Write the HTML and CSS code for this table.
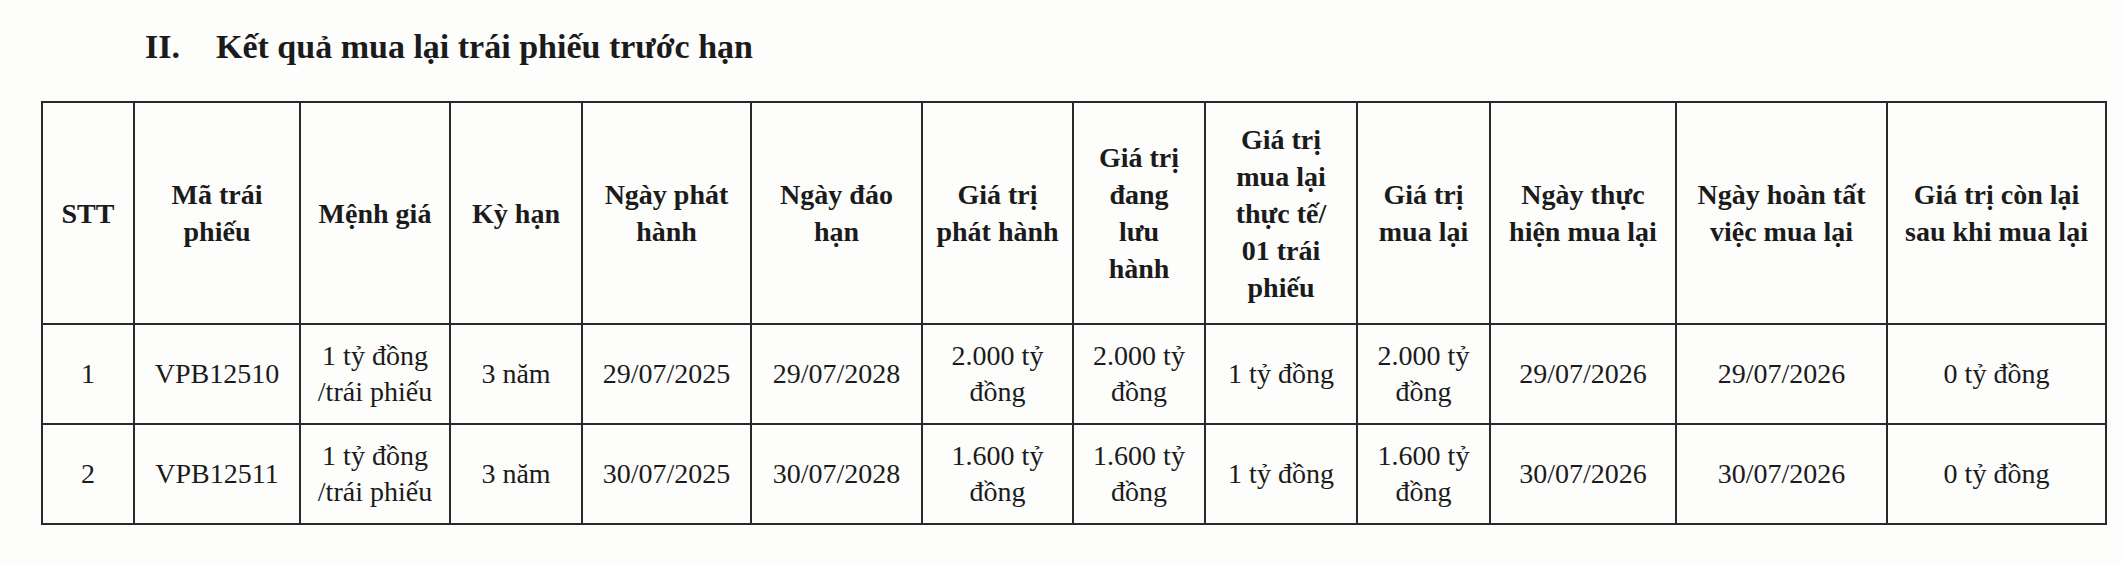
FILE: index.html
```html
<!DOCTYPE html>
<html lang="vi">
<head>
<meta charset="utf-8">
<title>Kết quả mua lại trái phiếu trước hạn</title>
<link rel="stylesheet" href="styles.css">
</head>
<body>
<div class="page">
  <h2 class="title"><span class="num">II.</span><span class="text">Kết quả mua lại trái phiếu trước hạn</span></h2>
  <table class="bonds">
    <colgroup>
      <col class="c1"><col class="c2"><col class="c3"><col class="c4"><col class="c5"><col class="c6"><col class="c7"><col class="c8"><col class="c9"><col class="c10"><col class="c11"><col class="c12"><col class="c13">
    </colgroup>
    <thead>
      <tr class="head">
        <th>STT</th>
        <th>Mã trái<br>phiếu</th>
        <th>Mệnh giá</th>
        <th>Kỳ hạn</th>
        <th>Ngày phát<br>hành</th>
        <th>Ngày đáo<br>hạn</th>
        <th>Giá trị<br>phát hành</th>
        <th>Giá trị<br>đang<br>lưu<br>hành</th>
        <th>Giá trị<br>mua lại<br>thực tế/<br>01 trái<br>phiếu</th>
        <th>Giá trị<br>mua lại</th>
        <th>Ngày thực<br>hiện mua lại</th>
        <th>Ngày hoàn tất<br>việc mua lại</th>
        <th>Giá trị còn lại<br>sau khi mua lại</th>
      </tr>
    </thead>
    <tbody>
      <tr class="row">
        <td>1</td>
        <td>VPB12510</td>
        <td>1 tỷ đồng<br>/trái phiếu</td>
        <td>3 năm</td>
        <td>29/07/2025</td>
        <td>29/07/2028</td>
        <td>2.000 tỷ<br>đồng</td>
        <td>2.000 tỷ<br>đồng</td>
        <td>1 tỷ đồng</td>
        <td>2.000 tỷ<br>đồng</td>
        <td>29/07/2026</td>
        <td>29/07/2026</td>
        <td>0 tỷ đồng</td>
      </tr>
      <tr class="row">
        <td>2</td>
        <td>VPB12511</td>
        <td>1 tỷ đồng<br>/trái phiếu</td>
        <td>3 năm</td>
        <td>30/07/2025</td>
        <td>30/07/2028</td>
        <td>1.600 tỷ<br>đồng</td>
        <td>1.600 tỷ<br>đồng</td>
        <td>1 tỷ đồng</td>
        <td>1.600 tỷ<br>đồng</td>
        <td>30/07/2026</td>
        <td>30/07/2026</td>
        <td>0 tỷ đồng</td>
      </tr>
    </tbody>
  </table>
</div>
</body>
</html>
```

FILE: styles.css
```css
html, body {
  margin: 0;
  padding: 0;
  background: #fdfdfc;
}

.page {
  width: 2122px;
  height: 566px;
  box-sizing: border-box;
  padding: 27px 0 0 41px;
  font-family: "Liberation Serif", "Times New Roman", serif;
  color: #1b1b1b;
}

.title {
  display: flex;
  margin: 0 0 34px 104px;
  font-size: 34px;
  line-height: 40px;
  font-weight: bold;
}

.title .num {
  width: 71px;
}

.bonds {
  border-collapse: collapse;
  table-layout: fixed;
  width: 2064px;
}

.bonds th,
.bonds td {
  border: 2px solid #2a2a2a;
  padding: 0 4px;
  text-align: center;
  vertical-align: middle;
  font-size: 28px;
}

.bonds th {
  font-weight: bold;
  line-height: 37px;
}

.bonds td {
  font-weight: normal;
  line-height: 36px;
}

.head {
  height: 222px;
}

.row {
  height: 100px;
}

.c1 { width: 92px; }
.c2 { width: 166px; }
.c3 { width: 150px; }
.c4 { width: 132px; }
.c5 { width: 169px; }
.c6 { width: 171px; }
.c7 { width: 151px; }
.c8 { width: 132px; }
.c9 { width: 152px; }
.c10 { width: 133px; }
.c11 { width: 186px; }
.c12 { width: 211px; }
.c13 { width: 219px; }
```
